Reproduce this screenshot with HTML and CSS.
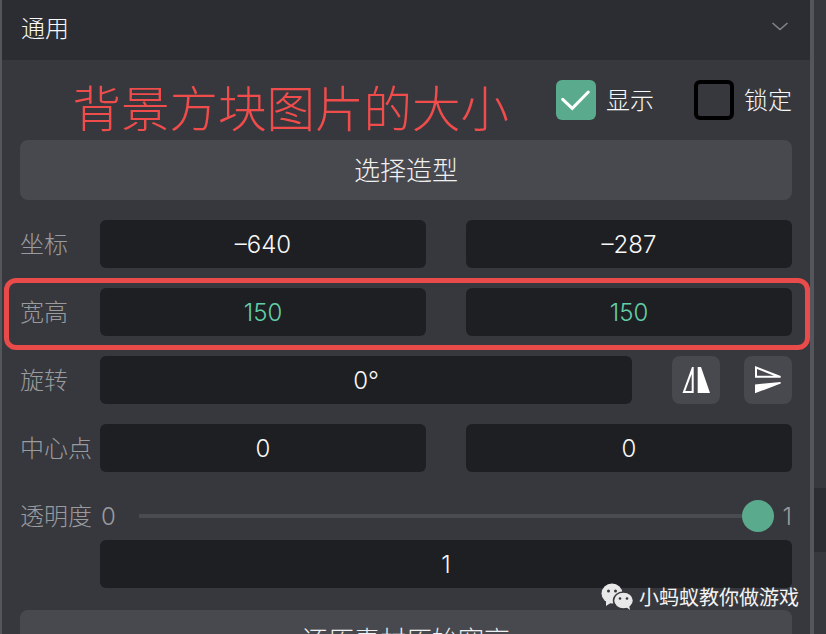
FILE: index.html
```html
<!DOCTYPE html>
<html>
<head>
	<meta charset="UTF-8">
	<title>通用</title>
	<link rel="stylesheet" href="styles.css">
</head>
<body>
	<div class="panel">
		<div class="panel-head">
			<span>通用</span>
			<svg class="chevron" width="16" height="9" viewBox="0 0 16 9"><polyline points="0.5,1 8,7.5 15.5,1"></polyline></svg>
		</div>
		<div class="panel-body">
			<div class="top-row">
				<h1 class="note">背景方块图片的大小</h1>
				<label class="check">
					<span class="box on">
						<svg width="40" height="40" viewBox="0 0 40 40"><polyline points="6.7,19.3 16.3,28.3 32.3,12"></polyline></svg>
					</span>
					<span class="check-text">显示</span>
				</label>
				<label class="check">
					<span class="box"></span>
					<span class="check-text">锁定</span>
				</label>
			</div>
			<a class="btn wide">选择造型</a>
			<div class="row">
				<span class="name">坐标</span>
				<div class="field">–640</div>
				<div class="field">–287</div>
			</div>
			<div class="row marked">
				<span class="name">宽高</span>
				<div class="field green">150</div>
				<div class="field green">150</div>
			</div>
			<div class="row">
				<span class="name">旋转</span>
				<div class="field">0°</div>
				<a class="btn icon">
					<svg width="48" height="48" viewBox="0 0 48 48"><path d="M20 11H21.7V37H10.5Z M19.7 18V35.1H13.3Z" fill-rule="evenodd"></path><path d="M25.7 11H29L38 37H25.7Z"></path></svg>
				</a>
				<a class="btn icon">
					<svg width="48" height="48" viewBox="0 0 48 48"><path d="M11 10L36.7 20V21.7H11Z M13 13V19.7H30Z" fill-rule="evenodd"></path><path d="M11 28.5L36.7 26V27.5L11 37.3Z"></path></svg>
				</a>
			</div>
			<div class="row">
				<span class="name">中心点</span>
				<div class="field">0</div>
				<div class="field">0</div>
			</div>
			<div class="slider-row">
				<span class="name">透明度</span>
				<span class="end">0</span>
				<div class="track"><span class="knob"></span></div>
				<span class="end">1</span>
			</div>
			<div class="row tight">
				<span class="name"></span>
				<div class="field">1</div>
			</div>
			<a class="btn wide">还原素材原始宽高</a>
		</div>
	</div>
	<div class="side">
		<div class="side-head"></div>
	</div>
	<div class="watermark">
		<svg width="32" height="27" viewBox="0 0 32 27">
			<ellipse cx="11" cy="10.5" rx="10.5" ry="10" fill="#e8e8e8"></ellipse>
			<path d="M5 17L5 23L11 19Z" fill="#e8e8e8"></path>
			<ellipse cx="22.5" cy="17.5" rx="10" ry="8.5" fill="#e8e8e8" stroke="#37383d" stroke-width="1.5"></ellipse>
			<path d="M25 24L29 27L28 22Z" fill="#e8e8e8"></path>
			<circle cx="7.5" cy="8" r="1.5" fill="#37383d"></circle>
			<circle cx="14.5" cy="8" r="1.5" fill="#37383d"></circle>
			<circle cx="19" cy="15.5" r="1.3" fill="#37383d"></circle>
			<circle cx="26" cy="15.5" r="1.3" fill="#37383d"></circle>
		</svg>
		<span>小蚂蚁教你做游戏</span>
	</div>
</body>
</html>
```

FILE: styles.css
```css
* {
	box-sizing: border-box;
}
body {
	margin: 0;
	width: 826px;
	height: 634px;
	overflow: hidden;
	position: relative;
	display: flex;
	background: #37383d;
	font-family: "Noto Sans CJK SC", "Inter", sans-serif;
	font-weight: 300;
	color: #fff;
}
.panel {
	flex: 0 0 814px;
	height: 634px;
	overflow: hidden;
	background: #37383d;
	border-left: 2px solid #55565b;
	border-right: 4px solid #55565b;
}
.side {
	flex: 1;
	padding-top: 488px;
}
.side-head {
	height: 64px;
	background: #2c2d32;
}
.panel-head {
	height: 60px;
	background: #2c2d32;
	display: flex;
	align-items: center;
	justify-content: space-between;
	padding: 0 22px 8px 19px;
	font-size: 24px;
	color: #f8f8f8;
}
.chevron polyline {
	fill: none;
	stroke: #85868a;
	stroke-width: 1.5;
}
.panel-body {
	padding: 20px 18px 0 18px;
}
.top-row {
	display: flex;
	align-items: center;
	height: 40px;
	margin-bottom: 20px;
}
.note {
	margin: 12px auto 0 52.5px;
	font-size: 48.5px;
	line-height: 40px;
	font-weight: 300;
	color: #f04c4c;
	white-space: nowrap;
}
.check {
	display: flex;
	align-items: center;
	gap: 10px;
	margin-right: 40px;
	font-size: 24px;
	color: #f8f8f8;
	white-space: nowrap;
}
.check:last-child {
	margin-right: 0;
}
.check-text {
	padding-bottom: 4px;
}
.box {
	width: 40px;
	height: 40px;
	border: 4px solid #000;
	border-radius: 6px;
}
.box.on {
	border: 0;
	background: #5aab8d;
}
.box svg {
	display: block;
}
.box polyline {
	fill: none;
	stroke: #fff;
	stroke-width: 3;
	stroke-linecap: round;
}
.btn {
	background: #48494e;
	border-radius: 8px;
	display: flex;
	align-items: center;
	justify-content: center;
}
.wide {
	height: 60px;
	padding-bottom: 4px;
	font-size: 26px;
	color: #f0f0f0;
	margin-bottom: 20px;
}
.icon {
	flex: 0 0 48px;
	height: 48px;
}
.icon + .icon {
	margin-left: -16px;
}
.icon svg {
	fill: #fff;
}
.row {
	display: flex;
	align-items: center;
	gap: 40px;
	height: 48px;
	margin-bottom: 20px;
	position: relative;
}
.row.marked::after {
	content: "";
	position: absolute;
	left: -16px;
	right: -18px;
	top: -10px;
	bottom: -14px;
	border: 5px solid #e94b4b;
	border-radius: 12px;
}
.row.tight {
	margin-bottom: 22px;
}
.name {
	flex: 0 0 80px;
	margin-right: -40px;
	padding-bottom: 4px;
	font-size: 24px;
	color: #9a9b9f;
	white-space: nowrap;
}
.field {
	flex: 1 1 0;
	height: 48px;
	background: #1e1f23;
	border-radius: 6px;
	display: flex;
	align-items: center;
	justify-content: center;
	font-family: "Inter", sans-serif;
	font-size: 24px;
	font-weight: 300;
	color: #f8f8f8;
}
.field.green {
	color: #62cfa9;
}
.slider-row {
	display: flex;
	align-items: center;
	height: 48px;
}
.slider-row .name {
	flex: 0 0 auto;
	margin-right: 9px;
}
.end {
	font-family: "Inter", sans-serif;
	font-size: 24px;
	font-weight: 300;
	color: #9a9b9f;
}
.track {
	flex: 1;
	height: 4px;
	margin: 0 9px 0 23px;
	background: #4a4b50;
	position: relative;
}
.knob {
	position: absolute;
	right: 0;
	top: -14px;
	width: 32px;
	height: 32px;
	border-radius: 50%;
	background: #5aab8d;
}
.watermark {
	position: absolute;
	left: 601px;
	top: 582px;
	display: flex;
	align-items: center;
	gap: 6px;
	font-size: 20px;
	font-weight: 400;
	color: #f4f4f4;
	white-space: nowrap;
}
```
